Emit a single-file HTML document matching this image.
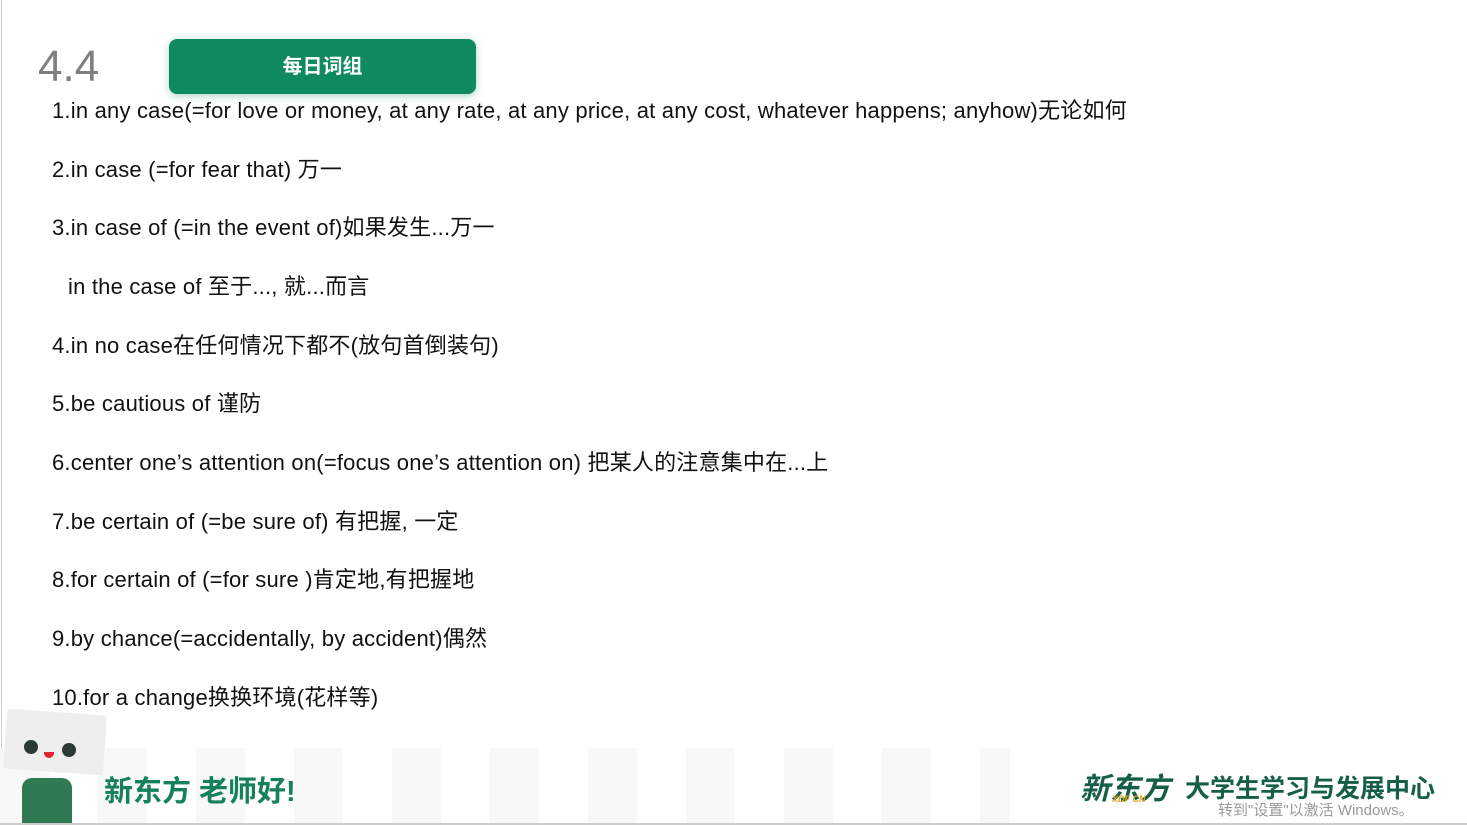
<!DOCTYPE html>
<html><head><meta charset="utf-8"><style>
body{margin:0;width:1467px;height:825px;background:#fff;position:relative;overflow:hidden;font-family:"Liberation Sans","Noto Sans CJK SC",sans-serif}
.l{position:absolute;left:52px;font-size:22px;color:#111;white-space:nowrap;letter-spacing:0.2px}
.t{position:absolute;left:38px;top:42px;font-size:44px;color:#7f7f7f}
.b{position:absolute;left:169px;top:39px;width:307px;height:55px;background:#0f8a5f;border-radius:8px;box-shadow:0 2px 8px rgba(15,138,95,.35);color:#fff;font-weight:bold;font-size:20px;text-align:center;line-height:56px}
.bot{position:absolute;left:0;top:748px;width:1010px;height:75px;background:repeating-linear-gradient(90deg,#f8f8f8 0 49px,#fff 49px 98px)}
</style></head><body>
<div style="position:absolute;left:1px;top:0;width:1px;height:825px;background:#ccc"></div>
<div style="position:absolute;left:0;top:823px;width:1467px;height:2px;background:#ccc"></div>
<div class="bot"></div>
<div class="t">4.4</div>
<div class="b">每日词组</div>
<div class="l" style="top:93px">1.in any case(=for love or money, at any rate, at any price, at any cost, whatever happens; anyhow)无论如何</div>
<div class="l" style="top:152px">2.in case (=for fear that) 万一</div>
<div class="l" style="top:210px">3.in case of (=in the event of)如果发生...万一</div>
<div class="l" style="top:269px;left:68px">in the case of 至于..., 就...而言</div>
<div class="l" style="top:328px">4.in no case在任何情况下都不(放句首倒装句)</div>
<div class="l" style="top:386px">5.be cautious of 谨防</div>
<div class="l" style="top:445px">6.center one’s attention on(=focus one’s attention on) 把某人的注意集中在...上</div>
<div class="l" style="top:504px">7.be certain of (=be sure of) 有把握, 一定</div>
<div class="l" style="top:562px">8.for certain of (=for sure )肯定地,有把握地</div>
<div class="l" style="top:621px">9.by chance(=accidentally, by accident)偶然</div>
<div class="l" style="top:680px">10.for a change换换环境(花样等)</div>
<div style="position:absolute;left:5px;top:712px;width:100px;height:60px;background:#eee;border-radius:4px;transform:rotate(4deg)"></div>
<div style="position:absolute;left:24px;top:740px;width:14px;height:14px;border-radius:50%;background:#2b3a33"></div>
<div style="position:absolute;left:62px;top:743px;width:14px;height:14px;border-radius:50%;background:#2b3a33"></div>
<div style="position:absolute;left:44px;top:752px;width:10px;height:6px;border-radius:0 0 6px 6px;background:#e0262c"></div>
<div style="position:absolute;left:22px;top:778px;width:50px;height:45px;background:#2f7a52;border-radius:10px 10px 0 0"></div>
<div style="position:absolute;left:104px;top:768px;font-size:29px;font-weight:bold;color:#14805c;white-space:nowrap">新东方 老师好!</div>
<div style="position:absolute;left:1080px;top:764px;font-size:30px;font-weight:bold;font-style:italic;color:#155f49">新东方</div>
<div style="position:absolute;left:1112px;top:794px;font-size:9px;font-weight:bold;font-style:italic;color:#e8a21a">XDF CN</div>
<div style="position:absolute;left:1185px;top:769px;font-size:25px;font-weight:bold;color:#155f49;white-space:nowrap">大学生学习与发展中心</div>
<div style="position:absolute;left:1218px;top:799px;font-size:15px;color:#999;white-space:nowrap">转到"设置"以激活 Windows。</div>
</body></html>
